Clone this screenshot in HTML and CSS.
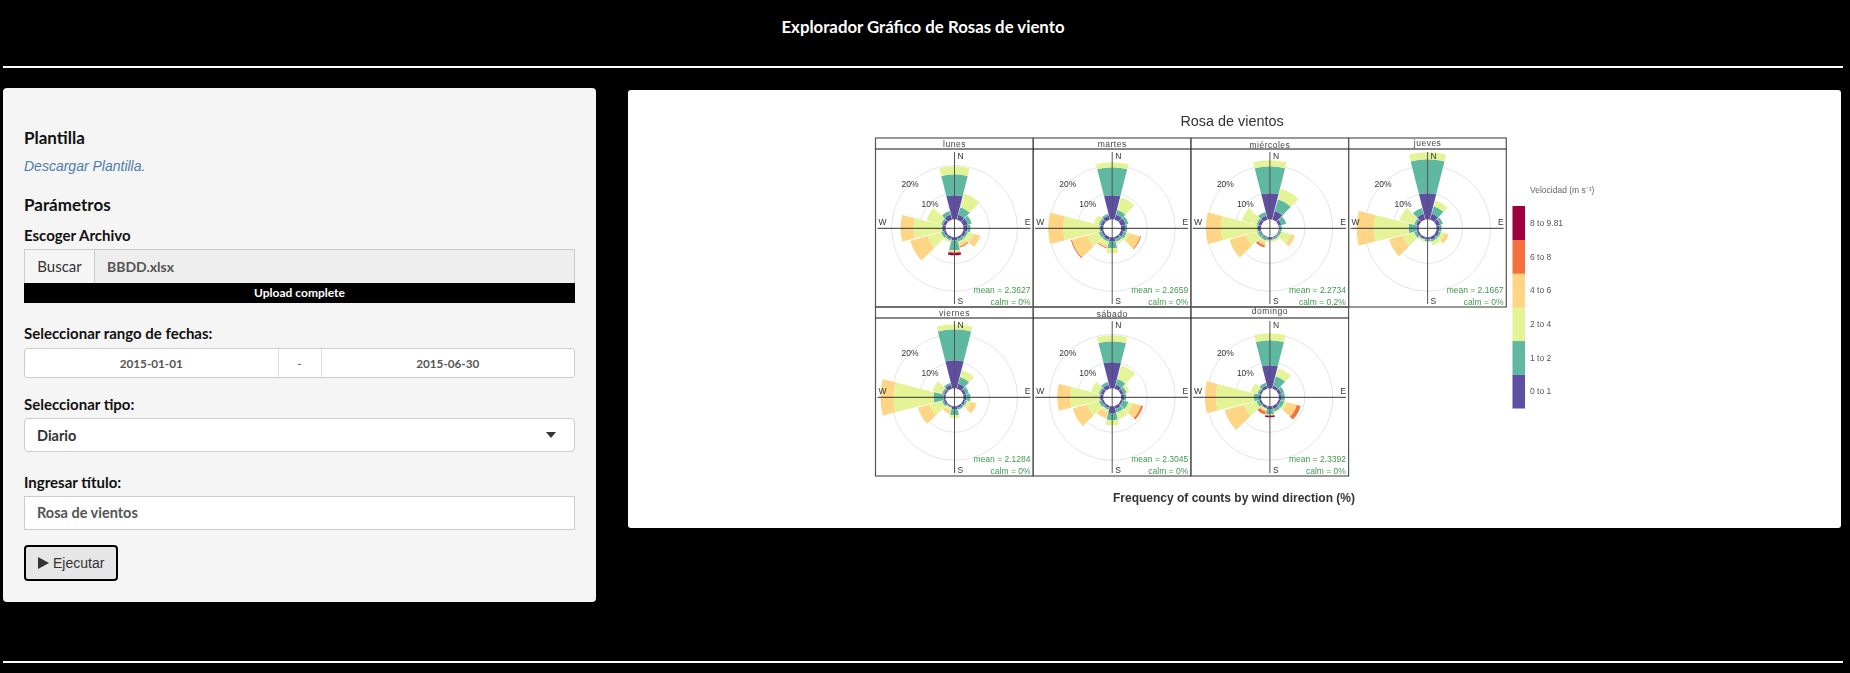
FILE: index.html
```html
<!doctype html>
<html lang="es">
<head>
	<meta charset="UTF-8" />
	<title>Explorador Gráfico de Rosas de viento</title>
	<link rel="stylesheet" href="styles.css">
</head>
<body>
	<h1 class="page-title">Explorador Gráfico de Rosas de viento</h1>
	<hr class="rule">
	<div class="main">
		<!--panel izquierdo-->
		<div class="well">
			<h4 class="first">Plantilla</h4>
			<a class="link" href="#">Descargar Plantilla.</a>
			<h4 class="params">Parámetros</h4>
			<label class="file-label">Escoger Archivo</label>
			<div class="file-group">
				<span class="file-btn">Buscar</span>
				<span class="file-name">BBDD.xlsx</span>
			</div>
			<div class="progress">Upload complete</div>
			<label class="dates-label">Seleccionar rango de fechas:</label>
			<div class="dates">
				<span class="date">2015-01-01</span>
				<span class="dash">-</span>
				<span class="date">2015-06-30</span>
			</div>
			<label class="type-label">Seleccionar tipo:</label>
			<div class="select">
				<span>Diario</span>
				<i class="caret"></i>
			</div>
			<label class="title-label">Ingresar título:</label>
			<div class="text-input">Rosa de vientos</div>
			<button class="run" type="button">
				<svg width="11" height="12" viewBox="0 0 11 12"><path d="M0 0 L11 6 L0 12 Z" fill="#333"/></svg>
				Ejecutar
			</button>
		</div>
		<!--grafico-->
		<div class="plot">
			<svg id="rose" class="rose" viewBox="628 90 1213 438"></svg>
		</div>
	</div>
	<hr class="rule bottom">
	<script src="chart.js"></script>
</body>
</html>
```

FILE: styles.css
```css
* {
    box-sizing: border-box;
}

body {
    margin: 0;
    height: 673px;
    overflow: hidden;
    background: #000;
    font-family: "Lato", "Noto Sans", sans-serif;
    font-size: 14px;
    color: #333;
}

.page-title {
    margin: 0;
    height: 66px;
    padding: 17px 4px 0 0;
    text-align: center;
    font-size: 16.8px;
    line-height: 20px;
    font-weight: 700;
    color: #fff;
}

.rule {
    height: 2px;
    margin: 0 7px 0 3px;
    border: 0;
    background: #fff;
}

.rule.bottom {
    margin-top: 59px;
}

.main {
    display: flex;
    align-items: flex-start;
    margin: 20px 9px 0 3px;
    gap: 32px;
}

.well {
    display: flex;
    flex-direction: column;
    align-items: stretch;
    width: 593px;
    height: 514px;
    padding: 40px 21px 0;
    background: #f5f5f5;
    border-radius: 4px;
}

h4 {
    margin: 0;
    font-size: 17px;
    line-height: 20px;
    font-weight: 700;
    color: #111;
}

.link {
    margin-top: 8px;
    height: 20px;
    font-family: "Liberation Sans", Arial, sans-serif;
    font-size: 14px;
    line-height: 20px;
    font-style: italic;
    color: #4d7da8;
    text-decoration: none;
}

.params {
    margin-top: 19px;
}

label {
    display: block;
    font-size: 15px;
    line-height: 20px;
    font-weight: 700;
    color: #111;
}

.file-label {
    margin-top: 10px;
    margin-bottom: 4px;
}

.file-group {
    display: flex;
    height: 34px;
    border: 1px solid #ccc;
    border-bottom: 0;
    background: #eee;
    line-height: 33px;
    font-size: 15px;
}

.file-btn {
    width: 70px;
    text-align: center;
    border-right: 1px solid #ccc;
    background: #f5f5f5;
}

.file-name {
    padding-left: 12px;
    font-size: 14px;
    font-weight: 700;
    color: #555;
}

.progress {
    height: 20px;
    background: #000;
    color: #fff;
    text-align: center;
    font-size: 12px;
    line-height: 20px;
    font-weight: 700;
}

.dates-label {
    margin-top: 20px;
    margin-bottom: 5px;
}

.dates {
    display: flex;
    height: 30px;
    border: 1px solid #ccc;
    border-radius: 3px;
    background: #fff;
    line-height: 28px;
    text-align: center;
    font-size: 11.7px;
    font-weight: 700;
    color: #555;
}

.date {
    flex: 1;
}

.dash {
    width: 44px;
    border-left: 1px solid #ddd;
    border-right: 1px solid #ddd;
    font-weight: 400;
}

.type-label {
    margin-top: 16px;
    margin-bottom: 4px;
}

.select {
    display: flex;
    align-items: center;
    justify-content: space-between;
    height: 34px;
    padding: 0 18px 0 12px;
    border: 1px solid #ccc;
    border-radius: 4px;
    background: #fff;
    font-size: 14.5px;
    font-weight: 700;
}

.caret {
    width: 0;
    height: 0;
    border-left: 5px solid transparent;
    border-right: 5px solid transparent;
    border-top: 6px solid #333;
}

.title-label {
    margin-top: 20px;
    margin-bottom: 4px;
}

.text-input {
    height: 34px;
    padding-left: 12px;
    border: 1px solid #ccc;
    background: #fff;
    line-height: 32px;
    font-size: 14.5px;
    font-weight: 700;
    color: #555;
}

.run {
    align-self: flex-start;
    display: flex;
    align-items: center;
    gap: 4px;
    width: 94px;
    height: 36px;
    margin-top: 15px;
    padding: 0 0 0 12px;
    border: 2px solid #000;
    border-radius: 4px;
    background: #e6e6e6;
    font-family: "Liberation Sans", Arial, sans-serif;
    font-size: 14px;
    color: #333;
}

.plot {
    flex: 1;
    height: 438px;
    margin-top: 2px;
    background: #fff;
    border-radius: 3px;
}

.rose {
    display: block;
    width: 100%;
    height: 100%;
    font-family: "Liberation Sans", Arial, sans-serif;
    filter: blur(0.3px);
}
```

FILE: chart.js
```js
var NS = 'http://www.w3.org/2000/svg';
var svg = document.getElementById('rose');

var COLORS = ['#5e4fa2', '#5eb9a0', '#e4f396', '#fdd585', '#f6703f', '#9e0142'];
var LEGEND = ['0 to 1', '1 to 2', '2 to 4', '4 to 6', '6 to 8', '8 to 9.81'];
var DEG = Math.PI / 180;

// radios acumulados en px, por direccion (N, 30, 60 ... 330)
var panels = [
  { name: 'lunes', col: 0, row: 0, dy: 0, mean: 'mean = 2.3627', calm: 'calm = 0%', dirs: [
    [33, 54, 62], [14, 22, 36], [14, 18], [13, 16], [12, 14, 20, 27], [11, 14, 16, 19, 20],
    [12, 22, 23, 24, 25, 27], [11, 13, 15], [11, 14, 28, 46], [12, 13, 41, 54], [12, 14, 29], [14, 18]
  ] },
  { name: 'martes', col: 1, row: 0, dy: 0, mean: 'mean = 2.2659', calm: 'calm = 0%', dirs: [
    [33, 61, 66], [14, 19, 32], [14, 17], [13, 15], [12, 15, 18, 29, 30], [11, 14, 16],
    [13, 20, 25], [12, 14, 18, 20, 21], [11, 14, 26, 42, 43], [12, 13, 49, 64], [12, 14, 19], [13, 15]
  ] },
  { name: 'miércoles', col: 2, row: 0, dy: 1, mean: 'mean = 2.2734', calm: 'calm = 0.2%', dirs: [
    [35, 62, 68], [18, 30, 41], [12, 17], [10, 12], [10, 12, 22, 26], [10, 12, 14],
    [11, 12, 14], [10, 13, 15, 18, 20], [10, 13, 25, 42], [12, 13, 49, 64], [12, 14, 29], [13, 17]
  ] },
  { name: 'jueves', col: 3, row: 0, dy: -1, mean: 'mean = 2.1667', calm: 'calm = 0%', dirs: [
    [35, 69, 76], [15, 23, 29], [13, 16], [12, 14], [12, 14, 18, 22], [12, 14, 18],
    [11, 13, 14], [11, 12, 14], [11, 14, 26, 40], [11, 19, 54, 71], [12, 14, 29], [15, 21]
  ] },
  { name: 'viernes', col: 0, row: 1, dy: 0, mean: 'mean = 2.1284', calm: 'calm = 0%', dirs: [
    [37, 68, 73], [14, 21, 28], [12, 15], [12, 16], [11, 13, 17, 23], [11, 13],
    [12, 18, 21], [10, 11, 14, 17], [11, 13, 26, 38], [11, 21, 61, 74], [11, 13, 23], [13, 15]
  ] },
  { name: 'sábado', col: 1, row: 1, dy: 1, mean: 'mean = 2.3045', calm: 'calm = 0%', dirs: [
    [35, 56, 62], [13, 19, 33], [12, 15, 18], [12, 14], [11, 17, 22, 30, 32], [12, 16, 23],
    [16, 23, 28], [11, 13, 16, 22], [11, 14, 26, 41], [12, 13, 42, 55], [12, 14, 22], [13, 16]
  ] },
  { name: 'domingo', col: 2, row: 1, dy: -2, mean: 'mean = 2.3392', calm: 'calm = 0%', dirs: [
    [32, 57, 64], [12, 22, 30], [12, 15], [12, 15], [11, 15, 18, 28, 32], [12, 15, 16],
    [12, 17, 17.5, 18, 18.5, 20], [11, 12, 13, 15, 18], [11, 14, 27, 47], [11, 16, 54, 65], [11, 13, 20], [12, 15]
  ] }
];

function add(tag, attrs, text) {
  var el = document.createElementNS(NS, tag);
  for (var k in attrs) el.setAttribute(k, attrs[k]);
  if (text) el.textContent = text;
  svg.appendChild(el);
  return el;
}

function label(x, y, text, size, anchor, fill, weight) {
  return add('text', {
    x: x, y: y, 'font-size': size, 'text-anchor': anchor || 'start',
    fill: fill || '#333', 'font-weight': weight || 'normal'
  }, text);
}

function line(x1, y1, x2, y2, color, width) {
  add('line', { x1: x1, y1: y1, x2: x2, y2: y2, stroke: color, 'stroke-width': width });
}

// un sector de la rosa entre r0 y r1
function wedge(cx, cy, dir, r0, r1, color) {
  var half = 14.2 * DEG;
  var a = dir * DEG;
  var pt = function (r, t) {
    return (cx + r * Math.sin(t)).toFixed(2) + ' ' + (cy - r * Math.cos(t)).toFixed(2);
  };
  add('path', {
    d: 'M' + pt(r0, a - half) + ' A' + r0 + ' ' + r0 + ' 0 0 1 ' + pt(r0, a + half) +
       ' L' + pt(r1, a + half) + ' A' + r1 + ' ' + r1 + ' 0 0 0 ' + pt(r1, a - half) + ' Z',
    fill: color
  });
}

var LEFT = 875.5, TOP = 138, W = 157.7, H = 169, STRIP = 11;

function drawPanel(p) {
  var x = LEFT + p.col * W;
  var y = TOP + p.row * H;
  var cx = x + 79;
  var cy = y + 90.3;

  add('circle', { cx: cx, cy: cy, r: 35, fill: 'none', stroke: '#e4e4ea', 'stroke-width': 1 });
  add('circle', { cx: cx, cy: cy, r: 63, fill: 'none', stroke: '#e4e4ea', 'stroke-width': 1 });

  p.dirs.forEach(function (radii, i) {
    var r0 = 9;
    radii.forEach(function (r, j) {
      wedge(cx, cy, i * 30, r0, r, COLORS[j]);
      r0 = r;
    });
  });

  line(cx, y + 14, cx, y + 166, '#555', 1);
  line(x + 2, cy, x + 155, cy, '#333', 1);

  label(cx + 3, y + 21, 'N', 8.5);
  label(cx + 3, y + 166, 'S', 8.5);
  label(x + 3, cy - 3, 'W', 8.5);
  label(x + 155, cy - 3, 'E', 8.5, 'end');
  label(cx - 53, y + 49, '20%', 8.5);
  label(cx - 33, y + 69, '10%', 8.5);

  label(x + 79, y + 9 + p.dy, p.name, 8.5, 'middle', '#444').setAttribute('letter-spacing', '0.5');
  label(x + 155, y + 155, p.mean, 8.5, 'end', '#3f9a4a');
  label(x + 155, y + 167, p.calm, 8.5, 'end', '#3f9a4a');

  add('rect', { x: x, y: y, width: W, height: H, fill: 'none', stroke: '#555', 'stroke-width': 1.2 });
  line(x, y + STRIP, x + W, y + STRIP, '#111', 1);
}

function drawLegend() {
  var x = 1512.5, y = 206, h = 33.7;
  label(1530, 193, 'Velocidad (m s⁻¹)', 8.5, 'start', '#666');
  for (var i = 0; i < 6; i++) {
    var top = y + (5 - i) * h;
    add('rect', { x: x, y: top, width: 12.5, height: h + 0.3, fill: COLORS[i] });
    label(1530, top + h / 2 + 3, LEGEND[i], 8.5, 'start', '#555');
  }
}

label(1232, 126, 'Rosa de vientos', 14.4, 'middle', '#333');
panels.forEach(drawPanel);
drawLegend();
label(1234, 502, 'Frequency of counts by wind direction (%)', 12, 'middle', '#333', 'bold');
```
